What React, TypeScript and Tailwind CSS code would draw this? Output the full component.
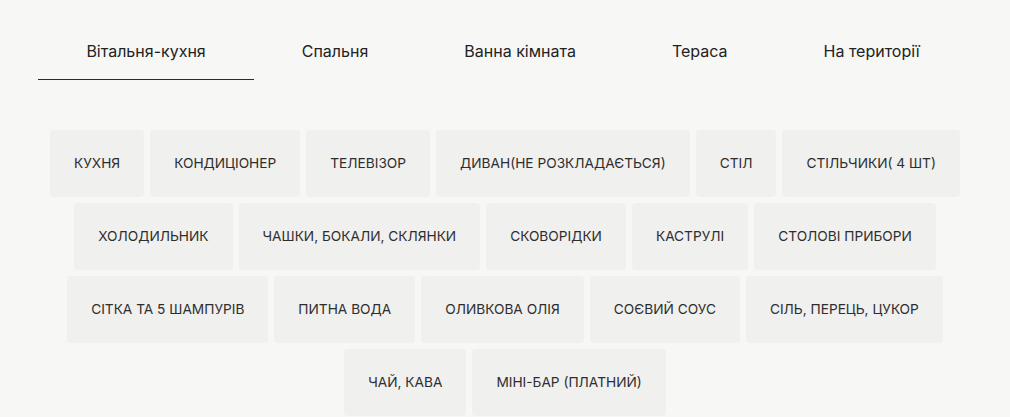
const tabs = ["Вітальня-кухня", "Спальня", "Ванна кімната", "Тераса", "На території"];

const amenities = [
  "Кухня",
  "Кондиціонер",
  "Телевізор",
  "Диван(не розкладається)",
  "Стіл",
  "Стільчики( 4 шт)",
  "Холодильник",
  "Чашки, бокали, склянки",
  "Сковорідки",
  "Каструлі",
  "Столові прибори",
  "Сітка та 5 шампурів",
  "Питна вода",
  "Оливкова олія",
  "Соєвий соус",
  "Сіль, перець, цукор",
  "Чай, кава",
  "Міні-бар (платний)",
];

export default function App() {
  const active = 0;
  return (
    <div
      className="min-h-screen bg-[#f7f7f6] text-[#2b2b2b]"
      style={{ fontFamily: "Inter, 'Noto Sans', sans-serif" }}
    >
      <nav className="flex justify-center pr-1 pt-10">
        {tabs.map((tab, i) => (
          <button
            key={tab}
            className={
              i === active
                ? "border-b border-[#2b2b2b] px-12 pb-[17px] text-[16px] leading-[22px] text-[#222]"
                : "border-b border-transparent px-12 pb-[17px] text-[16px] leading-[22px] text-[#222]"
            }
          >
            {tab}
          </button>
        ))}
      </nav>

      <ul className="mx-auto mt-[50px] flex max-w-[934px] flex-wrap justify-center gap-[6px]">
        {amenities.map((item) => (
          <li
            key={item}
            className="flex h-[67px] items-center rounded-[4px] bg-[#f0f0ef] px-6 text-[13.7px] uppercase text-[#2e2e2e]"
          >
            {item}
          </li>
        ))}
      </ul>
    </div>
  );
}
